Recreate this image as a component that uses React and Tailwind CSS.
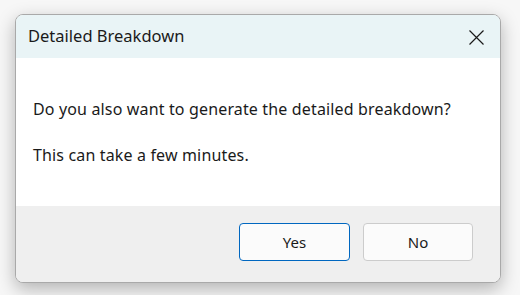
import React from "react";

const App = () => {
  return (
    <div
      className="w-[520px] h-[295px] bg-[#f7f7f7] pt-[14px] pl-[15px]"
      style={{ fontFamily: '"Segoe UI", "Noto Sans", sans-serif' }}
    >
      {/* Dialog window */}
      <div className="w-[486px] h-[269px] flex flex-col border border-[#a9a9a9] rounded-[8px] overflow-hidden bg-white shadow-[0_6px_18px_rgba(0,0,0,0.28)]">
        {/* Title bar */}
        <div className="h-[43px] flex items-center justify-between bg-[#e9f4f6] pl-[12px] pr-[16px]">
          <span className="text-[16.5px] text-[#1a1a1a]">Detailed Breakdown</span>
          <svg width="15" height="15" viewBox="0 0 15 15" className="mt-[1px]">
            <path d="M0.5 0.5 L14.5 14.5 M14.5 0.5 L0.5 14.5" stroke="#1a1a1a" strokeWidth="1.2" />
          </svg>
        </div>

        {/* Body */}
        <div className="h-[148px] bg-white pt-[40px] pl-[17px] text-[16px] tracking-[0.15px] text-[#1a1a1a] leading-[22px]">
          <p>Do you also want to generate the detailed breakdown?</p>
          <p className="mt-[24px]">This can take a few minutes.</p>
        </div>

        {/* Footer */}
        <div className="flex-1 bg-[#efefef] flex justify-end items-start pt-[17px] pr-[27px] gap-[13px]">
          <button className="w-[111px] h-[38px] rounded-[4px] border border-[#0067c0] bg-[#fbfbfb] text-[15px] text-[#1a1a1a]">
            Yes
          </button>
          <button className="w-[110px] h-[38px] rounded-[4px] border border-[#cccccc] bg-[#fbfbfb] text-[15px] text-[#1a1a1a]">
            No
          </button>
        </div>
      </div>
    </div>
  );
};

export default App;
